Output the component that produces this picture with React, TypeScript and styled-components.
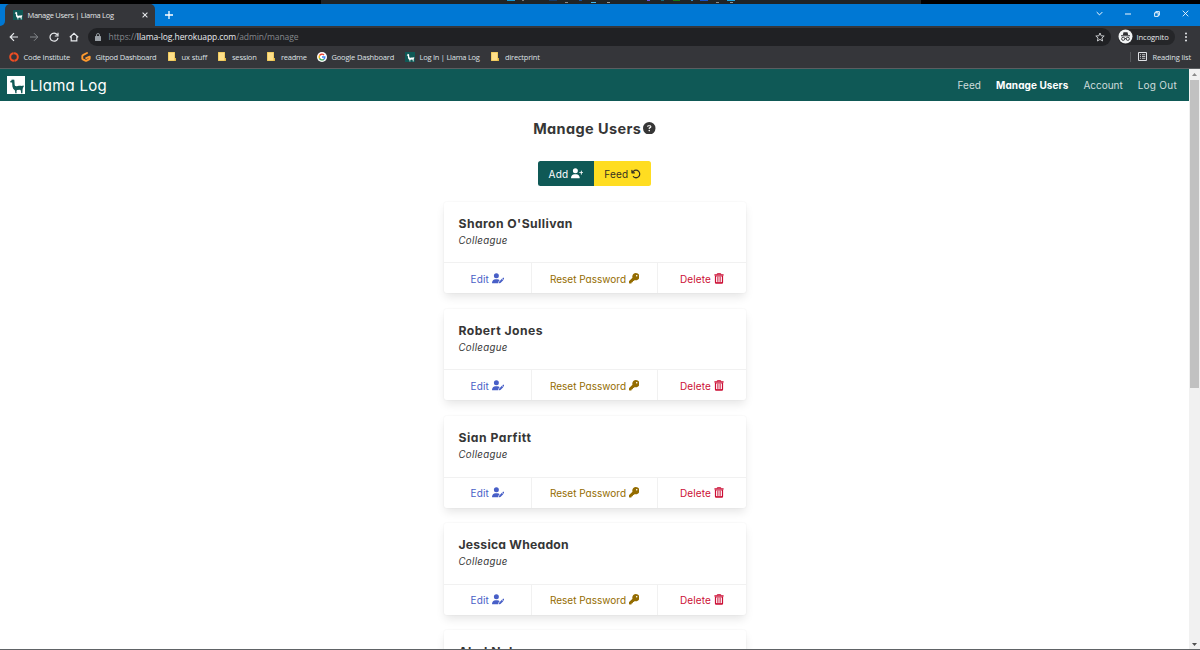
import React from "react";
import styled, { createGlobalStyle } from "styled-components";
import { FaUserPlus, FaUserPen, FaKey, FaCircleQuestion, FaArrowRotateLeft } from "react-icons/fa6";

const Global = createGlobalStyle`
  * { box-sizing: border-box; }
  html, body { margin: 0; height: 650px; overflow: hidden; background: #fff; }
`;

const app = `Inter, "Liberation Sans", sans-serif`;
const chrome = `"Open Sans", "Noto Sans", sans-serif`;

const Screen = styled.div`
  width: 1200px;
  height: 650px;
  display: flex;
  flex-direction: column;
  overflow: hidden;
  border-bottom: 1px solid #606366;
`;

const Label = styled.span<{ $ls?: number }>`
  letter-spacing: ${(p) => p.$ls ?? 0}px;
  white-space: nowrap;
`;

const TaskbarEdge = styled.div`
  flex: none;
  height: 4px;
  background: #000;
  padding-left: 321px;
  svg { display: block; }
`;

const TabStrip = styled.div`
  flex: none;
  height: 22px;
  display: flex;
  background: #0078d4;
  font: 7.5px ${chrome};
  color: #e4e6e8;
`;

const TabLead = styled.div`
  width: 5px;
  background: #35363a;
  &::before {
    content: "";
    display: block;
    height: 22px;
    background: #0078d4;
    border-bottom-right-radius: 5px;
  }
`;

const Tab = styled.div`
  width: 150px;
  height: 22px;
  display: flex;
  align-items: center;
  padding: 0 7px 0 8px;
  background: #35363a;
  border-radius: 5px 5px 0 0;
`;

const TabTitle = styled.span`
  flex: 1;
  margin-left: 4.5px;
  white-space: nowrap;
`;

const NewTab = styled.div`
  width: 28px;
  display: flex;
  align-items: center;
  justify-content: center;
`;

const WindowControls = styled.div`
  margin-left: auto;
  width: 115px;
  height: 19px;
  padding: 0 11px 0 11px;
  display: flex;
  align-items: center;
  justify-content: space-between;
`;

const Toolbar = styled.div`
  flex: none;
  height: 20px;
  background: #35363a;
  display: flex;
  align-items: center;
  padding: 1px 9px 0 9px;
`;

const NavIcons = styled.div`
  display: flex;
  align-items: center;
  gap: 10px;
`;

const Address = styled.div`
  margin-left: 9px;
  width: 1023px;
  height: 18px;
  border-radius: 9px;
  background: #202124;
  display: flex;
  align-items: center;
  padding: 0 6px 0 7px;
  font: 8.5px ${chrome};
  color: #85888c;
  b { font-weight: 400; color: #e8eaed; }
`;

const Url = styled.span`
  flex: 1;
  margin-left: 7.5px;
  white-space: nowrap;
`;

const Incognito = styled.div`
  margin-left: 7px;
  width: 57px;
  height: 16px;
  border-radius: 8px;
  background: #252629;
  display: flex;
  align-items: center;
  gap: 3.5px;
  font: 7.5px ${chrome};
  color: #e8eaed;
`;

const Kebab = styled.div`
  margin-left: auto;
  padding-right: 3px;
  display: flex;
`;

const Bookmarks = styled.div`
  flex: none;
  height: 23px;
  background: #35363a;
  border-bottom: 1px solid #5b5e61;
  display: flex;
  align-items: center;
  padding: 0 9px 1px;
  font: 7.5px ${chrome};
  color: #dfe1e5;
`;

const Bookmark = styled.div<{ $w: number; $gap?: number }>`
  width: ${(p) => p.$w}px;
  display: flex;
  align-items: center;
  gap: ${(p) => p.$gap ?? 4.5}px;
  white-space: nowrap;
  svg { flex: none; }
`;

const ReadingList = styled.div`
  margin-left: auto;
  height: 10px;
  border-left: 1px solid #56585c;
  padding-left: 7px;
  display: flex;
  align-items: center;
  gap: 5px;
  white-space: nowrap;
`;

const Viewport = styled.div`
  flex: 1;
  min-height: 0;
  display: flex;
`;

const Page = styled.div`
  flex: 1;
  overflow: hidden;
  font-family: ${app};
  font-feature-settings: "cv11";
  color: #363636;
`;

const Header = styled.header`
  height: 32px;
  background: #0f5956;
  display: flex;
  align-items: center;
  padding: 0 12px 0 7px;
  color: #fff;
`;

const Brand = styled.div`
  display: flex;
  align-items: center;
  gap: 5px;
  font-size: 15px;
`;

const Menu = styled.nav`
  margin-left: auto;
  display: flex;
  gap: 15px;
  font-size: 10px;
`;

const MenuItem = styled(Label)<{ $active?: boolean }>`
  font-weight: ${(p) => (p.$active ? 700 : 400)};
  color: ${(p) => (p.$active ? "#fff" : "#cfdddd")};
`;

const Main = styled.main`
  display: flex;
  flex-direction: column;
  align-items: center;
`;

const Title = styled.h1`
  margin: 17px 0 0;
  height: 20px;
  display: flex;
  align-items: center;
  gap: 2px;
  font-size: 14.5px;
  font-weight: 650;
`;

const ButtonGroup = styled.div`
  margin-top: 23px;
  margin-bottom: 16px;
  height: 25px;
  display: flex;
  border-radius: 2.5px;
  overflow: hidden;
`;

const GroupButton = styled.div<{ $bg: string; $fg: string; $w: number }>`
  width: ${(p) => p.$w}px;
  padding-top: 1px;
  display: flex;
  align-items: center;
  justify-content: center;
  gap: 2.5px;
  background: ${(p) => p.$bg};
  color: ${(p) => p.$fg};
  font-size: 10px;
  svg { margin-bottom: 1px; }
`;

const Card = styled.article`
  width: 302px;
  height: 91.4px;
  flex: none;
  margin-bottom: 15.7px;
  border-radius: 3px;
  background: #fff;
  box-shadow: 0 5px 10px -1px rgba(10, 10, 10, 0.1), 0 0 0 1px rgba(10, 10, 10, 0.015);
  display: flex;
  flex-direction: column;
`;

const CardBody = styled.div`
  flex: 1;
  padding: 13px 15px 0;
`;

const UserName = styled.div`
  height: 17px;
  line-height: 17px;
  font-size: 12.2px;
  font-weight: 650;
`;

const Role = styled.div`
  height: 17px;
  line-height: 17px;
  font-size: 9.7px;
  font-style: italic;
`;

const CardFooter = styled.div`
  height: 31px;
  display: flex;
  border-top: 1px solid #f1f1f1;
`;

const Action = styled.div<{ $w: number; $c: string }>`
  width: ${(p) => p.$w}px;
  padding-top: 1px;
  display: flex;
  align-items: center;
  justify-content: center;
  gap: 2.5px;
  font-size: 10px;
  color: ${(p) => p.$c};
  & + & { border-left: 1px solid #f1f1f1; }
  svg { margin-bottom: 1px; }
`;

const Scrollbar = styled.div`
  width: 11px;
  background: #f1f1f1;
  display: flex;
  flex-direction: column;
  align-items: center;
  justify-content: space-between;
  padding-bottom: 3px;
`;

const ScrollTop = styled.div`
  display: flex;
  flex-direction: column;
  align-items: center;
  gap: 4px;
  padding-top: 4px;
`;

const Thumb = styled.div`
  width: 9px;
  height: 308px;
  background: #c1c1c1;
`;

const Llama = ({ size, bg, fg }: { size: number; bg: string; fg: string }) => (
  <svg width={size} height={size} viewBox="0 0 18 18">
    <rect width="18" height="18" fill={bg} />
    <path fill={fg} d="M5 2.8 5.6 4l.8.1.5-1 .5 1.4.3 4.6c.2 1 1 1.3 2.2 1.1 1.8-.2 3.2-.4 4.6-.3 1 0 1.6-.5 2.1-.2.4.4.2 1.3-.5 1.8l-.5 1.8-.2 4h-1.3l-.2-2.6-.8-1-3.1.2-.5 1 .1 2.4H8.3L8 14.6l-1.8-1.8-.8-2.2-.3-4-1.6-.2-.3-1.1 1.5-1z" />
  </svg>
);

const Trash = () => (
  <svg width="10" height="11" viewBox="0 0 10 11" fill="none" stroke="currentColor">
    <path d="M.4 1.9h9.2" strokeWidth="1.3" />
    <path d="M3.3 1.5V.6h3.4v.9" strokeWidth=".9" />
    <path d="M1.5 2.4v7.2c0 .4.2.6.6.6h5.8c.4 0 .6-.2.6-.6V2.4" strokeWidth="1.2" />
    <path d="M3.6 3.6v5.3M5 3.6v5.3M6.4 3.6v5.3" strokeWidth=".7" />
    <path d="M2 3.1h6M2 9.5h6" strokeWidth=".8" />
  </svg>
);

const Folder = () => (
  <svg width="8" height="9" viewBox="0 0 8 9">
    <path d="M0 0h7v6h1v3H0z" fill="#e3b93f" />
    <path d="M.5.5h6v8h-6z" fill="#ffe08a" />
  </svg>
);

const CodeInstitute = () => (
  <svg width="10" height="10" viewBox="0 0 10 10">
    <circle cx="5" cy="5" r="3.8" fill="none" stroke="#f04e23" strokeWidth="2" />
    <path d="M4.6 0v2.4M5.4 7.6V10" stroke="#35363a" strokeWidth=".4" />
  </svg>
);

const Gitpod = () => (
  <svg width="10" height="10" viewBox="0 0 10 10" fill="none" stroke="#ff9a2e" strokeWidth="1.9" strokeLinecap="round" strokeLinejoin="round">
    <path d="M6 1 1.9 3.2a1 1 0 0 0-.6.9v2.3c0 .4.2.7.5.9l2.6 1.4c.4.2.8.2 1.2 0l2.5-1.4c.4-.2.6-.5.6-.9V4.6L5.2 6.2" />
  </svg>
);

const Google = () => (
  <svg width="10" height="10" viewBox="0 0 20 20">
    <circle cx="10" cy="10" r="10" fill="#fff" />
    <g fill="none" strokeWidth="2.8">
      <path d="M14 6A5.7 5.7 0 0 0 5 7.3" stroke="#ea4335" />
      <path d="M5 7.3a5.7 5.7 0 0 0 0 5.4" stroke="#fbbc05" />
      <path d="M5 12.7a5.7 5.7 0 0 0 8.7 1.7" stroke="#34a853" />
      <path d="M13.7 14.4A5.7 5.7 0 0 0 15.7 10H10" stroke="#4285f4" />
    </g>
  </svg>
);

const Line = ({ d, c = "#e8eaed", s = 10, w = 1.2 }: { d: string; c?: string; s?: number; w?: number }) => (
  <svg width={s} height={s} viewBox="0 0 10 10" fill="none" stroke={c} strokeWidth={w}>
    <path d={d} />
  </svg>
);

const TASKBAR_MARKS: [number, number, number, string][] = [
  [186, 8, 0, "#1597cf"], [201, 2, 0, "#777"], [228, 8, 0, "#173a66"], [244, 3, 2, "#888"],
  [258, 3, 0, "#194f9a"], [270, 5, 2, "#45b5e8"], [286, 3, 2, "#999"], [326, 3, 0, "#6852dd"],
  [340, 3, 0, "#176779"], [352, 7, 0, "#147814"], [370, 2, 0, "#338cc4"], [379, 8, 0, "#174fc4"],
  [395, 3, 2, "#888"], [406, 8, 0, "#20a5dd"], [409, 3, 2, "#999"],
];

const USERS: { name: string; spacing: number }[] = [
  { name: "Sharon O'Sullivan", spacing: 0.42 },
  { name: "Robert Jones", spacing: 0.45 },
  { name: "Sian Parfitt", spacing: 0.5 },
  { name: "Jessica Wheadon", spacing: 0.22 },
  { name: "Abel Nolan", spacing: 0.5 },
];

export default function App() {
  return (
    <Screen>
      <Global />
      <TaskbarEdge>
        <svg width="600" height="4">
          <rect width="600" height="4" fill="#202426" />
          {TASKBAR_MARKS.map(([x, w, y, c]) => (
            <rect key={x} x={x} y={y} width={w} height="1" fill={c} />
          ))}
        </svg>
      </TaskbarEdge>
      <TabStrip>
        <TabLead />
        <Tab>
          <Llama size={10} bg="#0f5956" fg="#fff" />
          <TabTitle><Label $ls={-0.3}>Manage Users | Llama Log</Label></TabTitle>
          <Line s={6} w={1.7} d="M1 1 9 9M9 1 1 9" />
        </Tab>
        <NewTab><Line s={8} w={1.6} d="M5 0V10M0 5H10" c="#fff" /></NewTab>
        <WindowControls>
          <Line s={7} w={1.4} d="M1 3 5 7 9 3" c="#fff" />
          <Line s={6} w={1.6} d="M0 5H10" c="#fff" />
          <Line s={6} w={1.5} d="M1 3H7V9H1ZM3 3V1H9V7H7" c="#fff" />
          <Line s={7} w={1.2} d="M1 1 9 9M9 1 1 9" c="#fff" />
        </WindowControls>
      </TabStrip>
      <Toolbar>
        <NavIcons>
          <Line d="M9 5H1.5M5 1.2 1.2 5 5 8.8" />
          <Line d="M1 5H8.5M5 1.2 8.8 5 5 8.8" c="#85888c" w={1} />
          <Line d="M8.3 2.8A4 4 0 1 0 9 5.8M9 .8V4H5.8" />
          <Line d="M.8 5.2 5 1.3 9.2 5.2M2.2 4.4V8.8H7.8V4.4" />
        </NavIcons>
        <Address>
          <svg width="6" height="8" viewBox="0 0 6 8">
            <rect y="3" width="6" height="5" rx=".6" fill="#9aa0a6" />
            <path d="M1.5 3V2a1.5 1.5 0 0 1 3 0v1" fill="none" stroke="#9aa0a6" strokeWidth=".9" />
          </svg>
          <Url><Label $ls={-0.08}>https://<b>llama-log.herokuapp.com</b>/admin/manage</Label></Url>
          <Line d="M5 1 6.2 3.8 9.2 4 6.9 6 7.6 9 5 7.4 2.4 9 3.1 6 .8 4 3.8 3.8Z" w={1} c="#c8cacd" />
        </Address>
        <Incognito>
          <svg width="15" height="15" viewBox="0 0 15 15">
            <circle cx="7.5" cy="7.5" r="7" fill="#f1f3f4" />
            <path d="M4.8 5.9 5.5 3.3h4l.7 2.6zM3 6.2h9v1H3z" fill="#303134" />
            <g fill="none" stroke="#303134" strokeWidth=".9">
              <circle cx="5.2" cy="9.8" r="1.6" />
              <circle cx="9.8" cy="9.8" r="1.6" />
              <path d="M6.8 9.5h1.4" />
            </g>
          </svg>
          <Label $ls={-0.05}>Incognito</Label>
        </Incognito>
        <Kebab>
          <svg width="4" height="10" fill="#e8eaed">
            <circle cx="2" cy="1.5" r="1" /><circle cx="2" cy="5" r="1" /><circle cx="2" cy="8.5" r="1" />
          </svg>
        </Kebab>
      </Toolbar>
      <Bookmarks>
        <Bookmark $w={72}><CodeInstitute /><Label $ls={-0.18}>Code Institute</Label></Bookmark>
        <Bookmark $w={87}><Gitpod /><Label $ls={-0.21}>Gitpod Dashboard</Label></Bookmark>
        <Bookmark $w={50} $gap={5.5}><Folder /><Label $ls={-0.1}>ux stuff</Label></Bookmark>
        <Bookmark $w={49} $gap={6}><Folder /><Label $ls={-0.2}>session</Label></Bookmark>
        <Bookmark $w={50} $gap={6}><Folder /><Label $ls={-0.25}>readme</Label></Bookmark>
        <Bookmark $w={88}><Google /><Label $ls={-0.17}>Google Dashboard</Label></Bookmark>
        <Bookmark $w={86}><Llama size={10} bg="#0f5956" fg="#fff" /><Label $ls={-0.25}>Log In | Llama Log</Label></Bookmark>
        <Bookmark $w={50} $gap={6}><Folder /><Label $ls={-0.2}>directprint</Label></Bookmark>
        <ReadingList>
          <svg width="9" height="9" viewBox="0 0 9 9" fill="none" stroke="#dfe1e5">
            <path d="M.5.5h8v8h-8z" />
            <path d="M2 2.7h1M2 4.5h1M2 6.3h1M4 2.7h3.2M4 4.5h3.2M4 6.3h3.2" strokeWidth=".8" />
          </svg>
          <Label $ls={-0.13}>Reading list</Label>
        </ReadingList>
      </Bookmarks>
      <Viewport>
        <Page>
          <Header>
            <Brand><Llama size={18} bg="#fff" fg="#0f5956" /><Label $ls={0.28}>Llama Log</Label></Brand>
            <Menu>
              <MenuItem $ls={0.1}>Feed</MenuItem>
              <MenuItem $active $ls={0.08}>Manage Users</MenuItem>
              <MenuItem $ls={-0.02}>Account</MenuItem>
              <MenuItem $ls={0.27}>Log Out</MenuItem>
            </Menu>
          </Header>
          <Main>
            <Title><Label $ls={0.4}>Manage Users</Label><FaCircleQuestion size={12.5} /></Title>
            <ButtonGroup>
              <GroupButton $bg="#0f5956" $fg="#fff" $w={56}><Label $ls={0.25}>Add</Label><FaUserPlus size={12.5} /></GroupButton>
              <GroupButton $bg="#ffdd21" $fg="#363020" $w={57}><Label $ls={0.15}>Feed</Label><FaArrowRotateLeft size={10} /></GroupButton>
            </ButtonGroup>
            {USERS.map(({ name, spacing }) => (
              <Card key={name}>
                <CardBody>
                  <UserName><Label $ls={spacing}>{name}</Label></UserName>
                  <Role><Label $ls={0.3}>Colleague</Label></Role>
                </CardBody>
                <CardFooter>
                  <Action $w={87.5} $c="#485fc7"><Label $ls={0.2}>Edit</Label><FaUserPen size={12.5} /></Action>
                  <Action $w={126} $c="#946c00"><Label>Reset Password</Label><FaKey size={10.5} /></Action>
                  <Action $w={88.5} $c="#cc0f35"><Label $ls={0.13}>Delete</Label><Trash /></Action>
                </CardFooter>
              </Card>
            ))}
          </Main>
        </Page>
        <Scrollbar>
          <ScrollTop>
            <svg width="5" height="3"><path d="M0 3 2.5 0 5 3z" fill="#8b8b8b" /></svg>
            <Thumb />
          </ScrollTop>
          <svg width="5" height="3"><path d="M0 0 2.5 3 5 0z" fill="#505050" /></svg>
        </Scrollbar>
      </Viewport>
    </Screen>
  );
}
